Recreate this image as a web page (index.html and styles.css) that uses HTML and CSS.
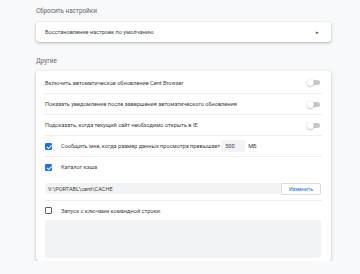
FILE: index.html
```html
<!DOCTYPE html>
<html lang="ru">
<head>
    <meta charset="UTF-8">
    <title>Настройки</title>
    <link rel="stylesheet" href="styles.css">
</head>
<body>
    <div class="page">
        <h2 class="section-title">Сбросить настройки</h2>
        <div class="card">
            <div class="row link-row">
                <span>Восстановление настроек по умолчанию</span>
                <span class="arrow">&#9656;</span>
            </div>
        </div>

        <h2 class="section-title second">Другие</h2>
        <div class="card">
            <div class="row">
                <span>Включить автоматическое обновление Cent Browser</span>
                <span class="toggle"></span>
            </div>
            <div class="row">
                <span>Показать уведомление после завершения автоматического обновления</span>
                <span class="toggle"></span>
            </div>
            <div class="row">
                <span>Подсказать, когда текущий сайт необходимо открыть в IE</span>
                <span class="toggle"></span>
            </div>
            <div class="row check-row">
                <span class="checkbox checked"></span>
                <span>Сообщить мне, когда размер данных просмотра превышает</span>
                <span class="num-input">500</span>
                <span>МБ</span>
            </div>
            <div class="row check-row">
                <span class="checkbox checked"></span>
                <span>Каталог кэша</span>
            </div>
            <div class="path-row">
                <span class="path-field">V:\PORTABL\cent\CACHE</span>
                <button class="change-button">Изменить</button>
            </div>
            <div class="row check-row short">
                <span class="checkbox"></span>
                <span>Запуск с ключами командной строки:</span>
            </div>
            <div class="textarea"></div>
        </div>
    </div>
</body>
</html>
```

FILE: styles.css
```css
body {
    font-family: Roboto, 'Noto Sans', sans-serif;
    background-color: #f8f9fa;
    margin: 0;
    padding: 0;
    color: #3c4043;
}

.page {
    width: 295px;
    margin-left: 36px;
    padding-top: 7px;
}

.section-title {
    font-size: 6.3px;
    font-weight: 400;
    color: #5f6368;
    margin: 0 0 7px 0;
    line-height: 8px;
}

.section-title.second {
    margin-top: 15px;
    margin-bottom: 6px;
}

.card {
    background: white;
    border-radius: 3px;
    box-shadow: 0 1px 2px rgba(60, 64, 67, 0.25), 0 1px 3px 1px rgba(60, 64, 67, 0.1);
    padding: 1px 0 3px 0;
}

.card:first-of-type {
    padding: 0;
}

.row {
    display: flex;
    align-items: center;
    height: 21px;
    margin: 0 9px;
    font-size: 5.6px;
    border-top: 1px solid #eceef0;
    box-sizing: border-box;
}

.row:first-child {
    border-top: none;
}

.row.short {
    height: 20px;
}

.link-row {
    height: 20px;
    justify-content: space-between;
}

.row .toggle {
    margin-left: auto;
}

.arrow {
    font-size: 5px;
    color: #3c4043;
    margin-right: 3px;
}

.toggle {
    position: relative;
    width: 11px;
    height: 5px;
    border-radius: 3px;
    background-color: #c4c7cb;
    margin-right: 2px;
}

.toggle::after {
    content: '';
    position: absolute;
    left: -2px;
    top: -1px;
    width: 7px;
    height: 7px;
    border-radius: 50%;
    background-color: white;
    box-shadow: 0 0.5px 1.5px rgba(0, 0, 0, 0.4);
}

.checkbox {
    width: 7px;
    height: 7px;
    border: 1px solid #5f6368;
    border-radius: 1px;
    box-sizing: border-box;
    margin-right: 9px;
    position: relative;
    flex: none;
}

.checkbox.checked {
    background-color: #1a73e8;
    border-color: #1a73e8;
}

.checkbox.checked::after {
    content: '';
    position: absolute;
    left: 1.5px;
    top: 0;
    width: 2px;
    height: 3.5px;
    border-right: 1px solid white;
    border-bottom: 1px solid white;
    transform: rotate(45deg);
}

.num-input {
    background-color: #f1f3f4;
    width: 20px;
    height: 12px;
    line-height: 12px;
    padding-left: 4px;
    margin: 0 3px 0 1px;
}

.path-row {
    display: flex;
    align-items: center;
    margin: 6px 10px 6px 9px;
    height: 11px;
    background-color: #f1f3f4;
    border-radius: 2px;
    font-size: 5.6px;
}

.path-field {
    flex: 1;
    padding-left: 3px;
}

.change-button {
    font-family: Roboto, sans-serif;
    font-size: 5.2px;
    color: #1a73e8;
    background: white;
    border: 1px solid #dadce0;
    border-radius: 2px;
    height: 12px;
    width: 40px;
    padding: 0;
}

.textarea {
    margin: 0 10px 0 9px;
    height: 38px;
    background-color: #f1f3f4;
    border-radius: 2px;
}
```
